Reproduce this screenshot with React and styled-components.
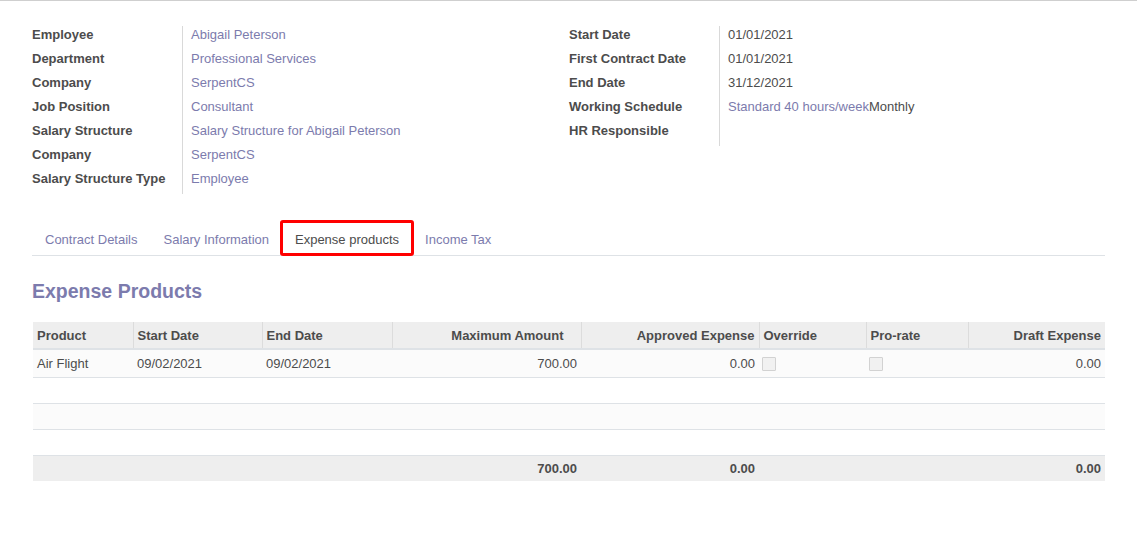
import React from "react";
import styled, { createGlobalStyle } from "styled-components";

const GlobalStyle = createGlobalStyle`
   body {
      margin: 0;
      background: #fff;
      font-family: "Liberation Sans", Arial, sans-serif;
      font-size: 13px;
      color: #4c4c4c;
   }
`;

const Sheet = styled.div`
   border-top: 1px solid #cfcfcf;
   padding: 25px 32px 40px 32px;
`;

const Groups = styled.div`
   display: grid;
   grid-template-columns: 537px 1fr;
`;

const Group = styled.div`
   display: flex;
   flex-direction: column;
`;

const Row = styled.div`
   display: flex;
   height: 24px;
`;

const Label = styled.div`
   width: 150px;
   font-weight: bold;
   line-height: 18px;
   border-right: 1px solid #d9d9d9;
`;

const Value = styled.div`
   padding-left: 8px;
   line-height: 18px;
   color: ${(props) => (props.link ? "#7c7bad" : "#4c4c4c")};
`;

const Link = styled.span`
   color: #7c7bad;
`;

const Tabs = styled.div`
   display: flex;
   align-items: flex-start;
   height: 35px;
   margin-top: 26px;
   border-bottom: 1px solid #dee2e6;
`;

const Tab = styled.div`
   line-height: 18px;
   color: ${(props) => (props.active ? "#4c4c4c" : "#7c7bad")};
   border: ${(props) => (props.active ? "3px solid #f00" : "1px solid transparent")};
   border-radius: ${(props) => (props.active ? "3px" : "0")};
   padding: ${(props) => (props.active ? "8px 12px 4px 12px" : "10px 12px 5px 12px")};
   margin: ${(props) => (props.active ? "0 -2px" : "0")};
   position: relative;
`;

const Heading = styled.h3`
   margin: 23px 0 19px 0;
   font-size: 19.5px;
   line-height: 24px;
   font-weight: bold;
   color: #7c7bad;
`;

const Table = styled.table`
   width: 1072px;
   margin-left: 1px;
   border-collapse: collapse;
   table-layout: fixed;
`;

const Th = styled.th`
   background: #eee;
   font-weight: bold;
   text-align: ${(props) => (props.num ? "right" : "left")};
   padding: 5px ${(props) => props.pr || 4}px 3px 4px;
   line-height: 18px;
   border-left: 1px solid #dcdcdc;
   border-bottom: 2px solid #dee2e6;
   white-space: nowrap;
   &:first-child {
      border-left: none;
   }
`;

const Tr = styled.tr`
   background: ${(props) => (props.striped ? "#fbfbfb" : "#fff")};
   height: ${(props) => props.h || 26}px;
`;

const Td = styled.td`
   padding: ${(props) => (props.low ? "1px 4px 0 4px" : "0 4px")};
   line-height: 18px;
   text-align: ${(props) => (props.num ? "right" : "left")};
   border-bottom: 1px solid #dee2e6;
   vertical-align: middle;
   white-space: nowrap;
`;

const Foot = styled.td`
   background: #eee;
   height: 25px;
   padding: 0 4px;
   font-weight: bold;
   text-align: right;
`;

const Check = styled.span`
   display: inline-block;
   width: 12px;
   height: 12px;
   margin-left: -1px;
   border: 1px solid #d2d2d2;
   background: #f1f1f1;
   border-radius: 1px;
   vertical-align: middle;
`;

const left = [
   ["Employee", "Abigail Peterson"],
   ["Department", "Professional Services"],
   ["Company", "SerpentCS"],
   ["Job Position", "Consultant"],
   ["Salary Structure", "Salary Structure for Abigail Peterson"],
   ["Company", "SerpentCS"],
   ["Salary Structure Type", "Employee"],
];

const cols = [100, 129, 130, 189, 178, 107, 102, 137];

const App = () => {
   return (
      <>
         <GlobalStyle />
         <Sheet>
            <Groups>
               <Group>
                  {left.map(([l, v], i) => (
                     <Row key={i}>
                        <Label>{l}</Label>
                        <Value link>{v}</Value>
                     </Row>
                  ))}
               </Group>
               <Group>
                  <Row>
                     <Label>Start Date</Label>
                     <Value>01/01/2021</Value>
                  </Row>
                  <Row>
                     <Label>First Contract Date</Label>
                     <Value>01/01/2021</Value>
                  </Row>
                  <Row>
                     <Label>End Date</Label>
                     <Value>31/12/2021</Value>
                  </Row>
                  <Row>
                     <Label>Working Schedule</Label>
                     <Value>
                        <Link>Standard 40 hours/week</Link>Monthly
                     </Value>
                  </Row>
                  <Row>
                     <Label>HR Responsible</Label>
                     <Value />
                  </Row>
               </Group>
            </Groups>

            <Tabs>
               <Tab>Contract Details</Tab>
               <Tab>Salary Information</Tab>
               <Tab active>Expense products</Tab>
               <Tab>Income Tax</Tab>
            </Tabs>

            <Heading>Expense Products</Heading>

            <Table>
               <colgroup>
                  {cols.map((w, i) => (
                     <col key={i} style={{ width: w }} />
                  ))}
               </colgroup>
               <thead>
                  <tr>
                     <Th>Product</Th>
                     <Th>Start Date</Th>
                     <Th>End Date</Th>
                     <Th num pr={17}>Maximum Amount</Th>
                     <Th num>Approved Expense</Th>
                     <Th>Override</Th>
                     <Th>Pro-rate</Th>
                     <Th num>Draft Expense</Th>
                  </tr>
               </thead>
               <tbody>
                  <Tr striped h={28}>
                     <Td low>Air Flight</Td>
                     <Td low>09/02/2021</Td>
                     <Td low>09/02/2021</Td>
                     <Td low num>700.00</Td>
                     <Td low num>0.00</Td>
                     <Td><Check /></Td>
                     <Td><Check /></Td>
                     <Td low num>0.00</Td>
                  </Tr>
                  {[false, true, false].map((s, i) => (
                     <Tr key={i} striped={s}>
                        <Td colSpan={8} />
                     </Tr>
                  ))}
               </tbody>
               <tfoot>
                  <tr>
                     <Foot />
                     <Foot />
                     <Foot />
                     <Foot>700.00</Foot>
                     <Foot>0.00</Foot>
                     <Foot />
                     <Foot />
                     <Foot>0.00</Foot>
                  </tr>
               </tfoot>
            </Table>
         </Sheet>
      </>
   );
};

export default App;
